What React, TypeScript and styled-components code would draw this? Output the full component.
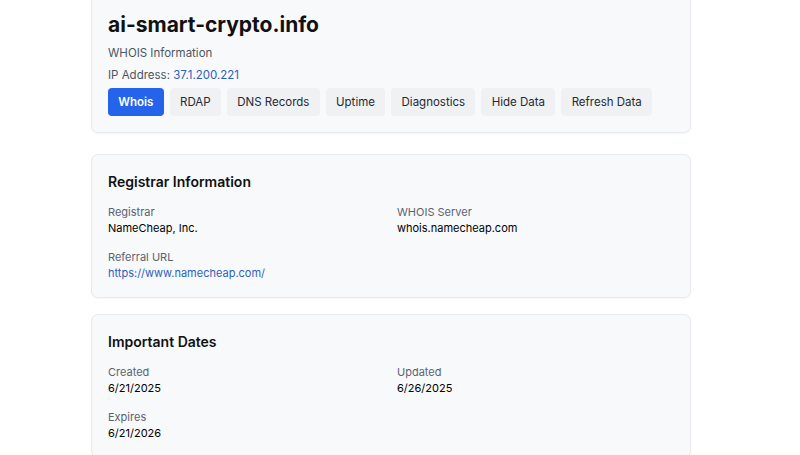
import React from 'react';
import styled, { createGlobalStyle } from 'styled-components';

const Global = createGlobalStyle`
  body {
    margin: 0;
    background: #ffffff;
    font-family: Inter, "Noto Sans", "Liberation Sans", sans-serif;
    color: #111827;
  }
`

const Page = styled.div`
  width: 600px;
  margin: -8px 0 0 91px;
  display: flex;
  flex-direction: column;
`

const Card = styled.section<{ $gap?: number }>`
  background: #f8f9fb;
  border: 1px solid #e8eaee;
  border-radius: 7px;
  box-shadow: 0 1px 2px rgba(0, 0, 0, 0.04);
  padding: 16px;
  margin-bottom: ${(p) => p.$gap ?? 16}px;
`

const Title = styled.h1`
  margin: 0;
  font-size: 21px;
  line-height: 32px;
  font-weight: 700;
  color: #111111;
`

const Sub = styled.div`
  margin-top: 2px;
  font-size: 11.5px;
  line-height: 20px;
  color: #4b5563;
`

const Ip = styled.div`
  margin-top: 2px;
  font-size: 11.5px;
  line-height: 20px;
  color: #4b5563;
  span { color: #2c5fbf; }
`

const Tabs = styled.div`
  display: flex;
  gap: 6px;
  margin-top: 3px;
`

const Tab = styled.button<{ $active?: boolean }>`
  flex: none;
  white-space: nowrap;
  font-family: inherit;
  font-size: 11.5px;
  font-weight: ${(p) => (p.$active ? 600 : 400)};
  height: 28px;
  padding: 0 10.3px;
  border: none;
  border-radius: 4px;
  background: ${(p) => (p.$active ? '#2563eb' : '#eff1f3')};
  color: ${(p) => (p.$active ? '#ffffff' : '#262b33')};
  cursor: pointer;
`

const Heading = styled.h2`
  margin: 0;
  font-size: 14px;
  line-height: 22px;
  font-weight: 600;
  color: #111111;
`

const Grid = styled.div`
  display: grid;
  grid-template-columns: 1fr 1fr;
  column-gap: 12px;
  row-gap: 13px;
  margin-top: 11px;
`

const Field = styled.div`
  display: flex;
  flex-direction: column;
`

const Label = styled.div`
  font-size: 11px;
  line-height: 16px;
  color: #5b6270;
`

const Value = styled.div<{ $link?: boolean }>`
  font-size: 11px;
  line-height: 16px;
  font-weight: 400;
  color: ${(p) => (p.$link ? '#2c5fbf' : '#000000')};
`

const tabs = ['Whois', 'RDAP', 'DNS Records', 'Uptime', 'Diagnostics', 'Hide Data', 'Refresh Data']

const sections = [
  {
    title: 'Registrar Information',
    fields: [
      { label: 'Registrar', value: 'NameCheap, Inc.' },
      { label: 'WHOIS Server', value: 'whois.namecheap.com' },
      { label: 'Referral URL', value: 'https://www.namecheap.com/', link: true },
    ],
  },
  {
    title: 'Important Dates',
    fields: [
      { label: 'Created', value: '6/21/2025' },
      { label: 'Updated', value: '6/26/2025' },
      { label: 'Expires', value: '6/21/2026' },
    ],
  },
]

export default function App() {
  return (
    <>
      <Global />
      <Page>
        <Card $gap={21}>
          <Title>ai-smart-crypto.info</Title>
          <Sub>WHOIS Information</Sub>
          <Ip>IP Address: <span>37.1.200.221</span></Ip>
          <Tabs>
            {tabs.map((t, i) => (
              <Tab key={t} $active={i === 0}>{t}</Tab>
            ))}
          </Tabs>
        </Card>
        {sections.map((s) => (
          <Card key={s.title}>
            <Heading>{s.title}</Heading>
            <Grid>
              {s.fields.map((f) => (
                <Field key={f.label}>
                  <Label>{f.label}</Label>
                  <Value $link={f.link}>{f.value}</Value>
                </Field>
              ))}
            </Grid>
          </Card>
        ))}
      </Page>
    </>
  )
}
